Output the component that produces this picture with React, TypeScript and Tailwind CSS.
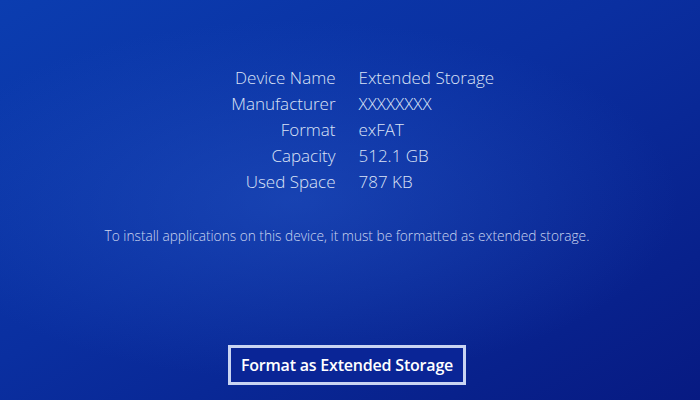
const rows: [string, string][] = [
  ["Device Name", "Extended Storage"],
  ["Manufacturer", "XXXXXXXX"],
  ["Format", "exFAT"],
  ["Capacity", "512.1 GB"],
  ["Used Space", "787 KB"],
]

export default function App() {
  return (
    <div
      className="relative w-[700px] h-[400px] overflow-hidden bg-[linear-gradient(150deg,#0b3db0_0%,#0a2fa0_45%,#071a82_100%)]"
      style={{ fontFamily: "'Open Sans', 'Noto Sans', sans-serif" }}
    >
      <div className="absolute inset-0 bg-[radial-gradient(ellipse_55%_45%_at_42%_50%,rgba(40,90,200,0.45),transparent)]" />

      <div className="relative flex flex-col items-center h-full pr-[6px]">
        {/* storage details */}
        <div className="grid grid-cols-[1fr_1fr] gap-x-[23px] w-full pt-[65px]">
          {rows.map(([label, value]) => (
            <div key={label} className="contents">
              <div className="text-right text-[17px] leading-[26px] font-light text-[#dbe3f6]">{label}</div>
              <div className="text-left text-[17px] leading-[26px] font-light text-[#dbe3f6]">{value}</div>
            </div>
          ))}
        </div>

        <p className="mt-[32px] text-[13.7px] leading-[18px] font-light text-[#cbd5f0]">
          To install applications on this device, it must be formatted as extended storage.
        </p>

        <button className="mt-auto mb-[15px] h-[40px] px-[10px] border-[3px] border-[#c9d4f2] bg-[#0a2596] text-white text-[16px] font-semibold tracking-[-0.2px]">
          Format as Extended Storage
        </button>
      </div>
    </div>
  )
}
